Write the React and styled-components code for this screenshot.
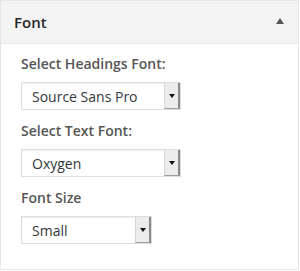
import React from "react";
import styled, { createGlobalStyle } from "styled-components";

const Global = createGlobalStyle`
  html, body { margin: 0; padding: 0; background: #fff; }
  body { font-family: "Open Sans", "Noto Sans", sans-serif; }
`;

const Panel = styled.div`
  width: 297px;
  height: 268px;
  border: 1px solid #e5e5e5;
  background: #fff;
  display: flex;
  flex-direction: column;
`;

const Header = styled.div`
  height: 43px;
  background: #f3f3f3;
  border-bottom: 1px solid #e5e5e5;
  display: flex;
  align-items: center;
  justify-content: space-between;
  padding: 0 14px 0 13px;
  box-sizing: border-box;
`;

const Title = styled.h3`
  margin: 0;
  font-size: 15px;
  font-weight: 600;
  color: #23282d;
`;

const Toggle = styled.span`
  width: 0;
  height: 0;
  border-left: 4px solid transparent;
  border-right: 4px solid transparent;
  border-bottom: 6px solid #555;
  margin-top: -2px;
`;

const Body = styled.div`
  padding: 10px 20px 0 20px;
  display: flex;
  flex-direction: column;
`;

const Field = styled.div`
  display: flex;
  flex-direction: column;
  margin-bottom: 11px;
`;

const Label = styled.label`
  font-size: 14px;
  font-weight: 600;
  color: #555;
  line-height: 20px;
  margin-bottom: 8px;
`;

const Select = styled.div`
  width: ${(p) => p.$w}px;
  height: 28px;
  box-sizing: border-box;
  border: 1px solid #ddd;
  box-shadow: inset 0 1px 2px rgba(0, 0, 0, 0.07);
  background: #fff;
  display: flex;
  align-items: stretch;
`;

const Value = styled.span`
  flex: 1;
  font-size: 14px;
  color: #32373c;
  padding-left: 10px;
  display: flex;
  align-items: center;
`;

const Button = styled.span`
  width: 16px;
  background: #ececec;
  border-left: 1px solid #d5d5d5;
  border-right: 2px solid #8a8a8a;
  border-bottom: 1px solid #a0a0a0;
  display: flex;
  align-items: center;
  justify-content: center;
  box-sizing: border-box;
`;

const Arrow = styled.span`
  width: 0;
  height: 0;
  border-left: 3px solid transparent;
  border-right: 3px solid transparent;
  border-top: 4px solid #111;
`;

function FakeSelect({ value, width }) {
  return (
    <Select $w={width}>
      <Value>{value}</Value>
      <Button>
        <Arrow />
      </Button>
    </Select>
  );
}

export default function App() {
  return (
    <>
      <Global />
      <Panel>
        <Header>
          <Title>Font</Title>
          <Toggle />
        </Header>
        <Body>
          <Field>
            <Label>Select Headings Font:</Label>
            <FakeSelect value="Source Sans Pro" width={160} />
          </Field>
          <Field>
            <Label>Select Text Font:</Label>
            <FakeSelect value="Oxygen" width={160} />
          </Field>
          <Field>
            <Label>Font Size</Label>
            <FakeSelect value="Small" width={131} />
          </Field>
        </Body>
      </Panel>
    </>
  );
}
